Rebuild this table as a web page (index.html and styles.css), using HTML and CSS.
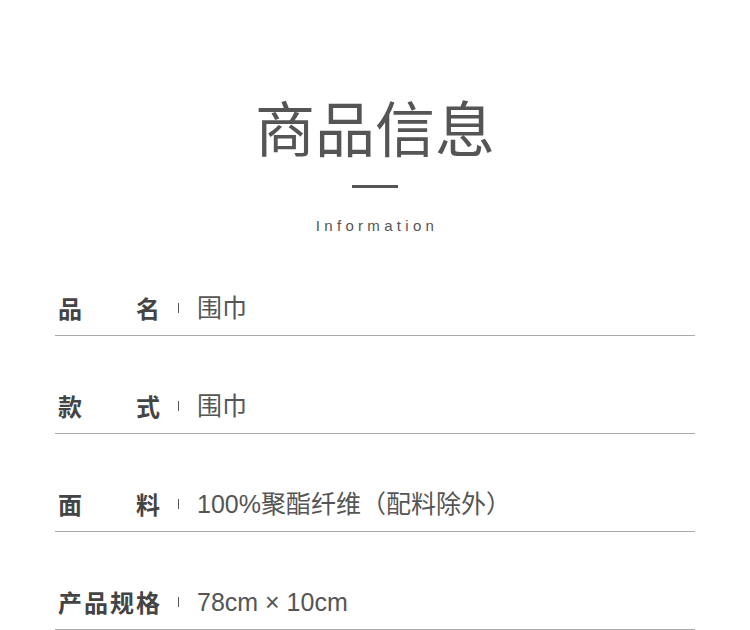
FILE: index.html
```html
<!DOCTYPE html>
<html lang="zh">
<head>
<meta charset="utf-8">
<link rel="stylesheet" href="styles.css">
</head>
<body>
<div class="page">
  <header class="head">
    <h1 class="title">商品信息</h1>
    <div class="dash"></div>
    <div class="sub">Information</div>
  </header>
  <div class="rows">
    <div class="row">
      <div class="label"><span>品</span><span>名</span></div>
      <div class="tick"></div>
      <div class="value">围巾</div>
    </div>
    <div class="row">
      <div class="label"><span>款</span><span>式</span></div>
      <div class="tick"></div>
      <div class="value">围巾</div>
    </div>
    <div class="row">
      <div class="label"><span>面</span><span>料</span></div>
      <div class="tick"></div>
      <div class="value">100%聚酯纤维（配料除外）</div>
    </div>
    <div class="row">
      <div class="label"><span>产</span><span>品</span><span>规</span><span>格</span></div>
      <div class="tick"></div>
      <div class="value">78cm × 10cm</div>
    </div>
  </div>
</div>
</body>
</html>
```
FILE: styles.css
```css
html, body {
  margin: 0;
  padding: 0;
  background: #fff;
}
body {
  font-family: "Liberation Sans", "Noto Sans CJK SC", sans-serif;
  color: #555;
}
.page {
  width: 750px;
}
.head {
  display: flex;
  flex-direction: column;
  align-items: center;
  padding-top: 94px;
}
.title {
  margin: 0;
  font-family: "Noto Sans CJK SC", sans-serif;
  font-weight: 400;
  font-size: 60px;
  line-height: 64px;
  color: #555;
}
.dash {
  width: 46px;
  height: 3px;
  background: #555;
  margin-top: 27px;
}
.sub {
  margin-top: 28px;
  font-size: 15px;
  line-height: 20px;
  letter-spacing: 4.3px;
  color: #555;
  padding-left: 4px;
}
.rows {
  margin: 2px 0 0 55px;
  width: 640px;
}
.row {
  display: flex;
  align-items: center;
  padding: 55px 0 12px 3px;
  border-bottom: 1px solid #aaa;
  height: 30px;
}
.label {
  width: 102px;
  display: flex;
  justify-content: space-between;
  font-family: "Noto Sans CJK SC", sans-serif;
  font-weight: 700;
  font-size: 24px;
  line-height: 30px;
  color: #444;
}
.tick {
  width: 1px;
  height: 10px;
  background: #555;
  margin: 0 18px;
}
.value {
  font-size: 25px;
  line-height: 30px;
  color: #555;
}
```
